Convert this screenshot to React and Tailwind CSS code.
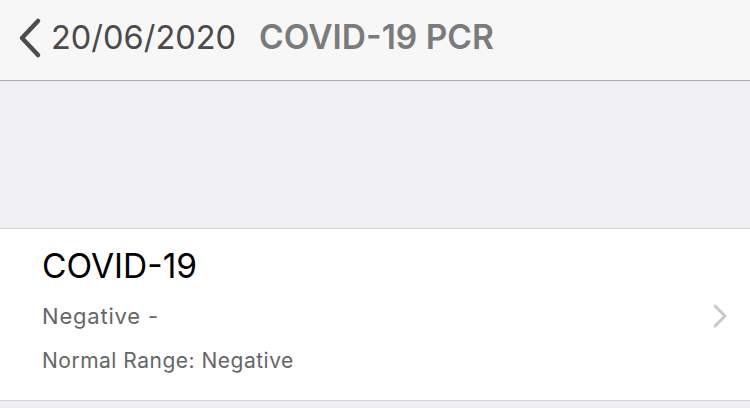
import React from 'react';

const font = { fontFamily: 'Inter, "Liberation Sans", Arial, sans-serif' };

const App = () => {
  return (
    <div className="w-[750px] h-[408px] bg-[#efeff4] flex flex-col overflow-hidden" style={font}>
      <header className="h-[81px] shrink-0 bg-[#f7f7f7] border-b border-[#a9a9ad] flex items-center pl-[16px] pb-[4px]">
        <svg width="28" height="42" viewBox="0 0 28 42" className="mr-[7px]">
          <path d="M22 4 L6 21 L22 38" fill="none" stroke="#4d4d4d" strokeWidth="4.5" strokeLinecap="round" strokeLinejoin="round" />
        </svg>
        <span className="text-[32.5px] text-[#4a4a4a] leading-none">20/06/2020</span>
        <span className="text-[33.5px] font-semibold text-[#7b7b7b] leading-none ml-[23px]">COVID-19 PCR</span>
      </header>
      <div className="h-[147px] shrink-0" />
      <div className="h-[173px] shrink-0 bg-white border-y border-[#d3d3d6] flex items-center pl-[42px] pr-[22px]">
        <div className="flex-1 flex flex-col -mt-[8px]">
          <span className="text-[33.5px] text-black leading-none">COVID-19</span>
          <span className="text-[22px] tracking-[0.8px] text-[#666] leading-none mt-[21px]">Negative -</span>
          <span className="text-[21px] tracking-[0.5px] text-[#666] leading-none mt-[23px]">Normal Range: Negative</span>
        </div>
        <svg width="16" height="26" viewBox="0 0 16 26" className="mt-[3px]">
          <path d="M3 3 L13 13 L3 23" fill="none" stroke="#c7c7cc" strokeWidth="3" strokeLinecap="round" strokeLinejoin="round" />
        </svg>
      </div>
    </div>
  );
};

export default App;
